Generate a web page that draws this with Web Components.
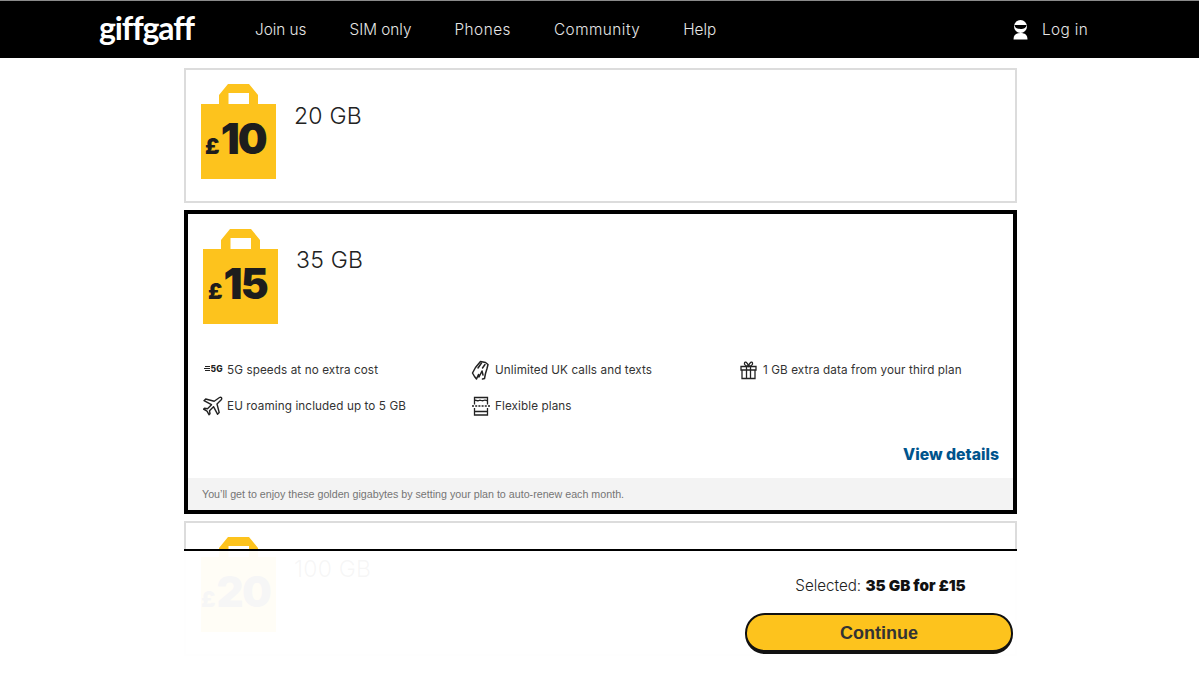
<!DOCTYPE html>
<html lang="en">
<head>
<meta charset="utf-8">
<title>giffgaff plans</title>
<style>
  html, body { margin: 0; height: 100%; background: #fff; }
  body { position: relative; overflow: hidden; font-family: "Inter", "Liberation Sans", sans-serif; color: #222; }
  main { display: flex; flex-direction: column; gap: 7px; width: 833px; margin: 10px 0 0 184px; }
</style>
</head>
<body>
<gg-header></gg-header>
<main>
  <gg-plan price="10" data="20 GB"></gg-plan>
  <gg-plan price="15" data="35 GB" selected>
    <gg-feature icon="fiveg">5G speeds at no extra cost</gg-feature>
    <gg-feature icon="hand">Unlimited UK calls and texts</gg-feature>
    <gg-feature icon="gift">1 GB extra data from your third plan</gg-feature>
    <gg-feature icon="plane">EU roaming included up to 5 GB</gg-feature>
    <gg-feature icon="box">Flexible plans</gg-feature>
  </gg-plan>
  <gg-plan price="20" data="100 GB"></gg-plan>
</main>
<gg-summary selected-text="35 GB for £15"></gg-summary>

<script>
class GgHeader extends HTMLElement {
  constructor() {
    super();
    this.attachShadow({mode: "open"});
    this.shadowRoot.innerHTML = `
<style>
  :host { display: flex; align-items: center; background: #000; border-top: 1px solid #8a8a8a; box-sizing: border-box; height: 58px; padding: 0 111px 0 99px; color: #e6e6e6; }
  .logo { font: 700 32px/1 "Lato", sans-serif; letter-spacing: -1.1px; color: #fff; width: 156px; margin-top: -4px; }
  nav { display: flex; gap: 43px; font: 300 15.300px/1 "Inter", sans-serif; }
  .wide { letter-spacing: .5px; }
  .login { margin-left: auto; display: flex; align-items: center; gap: 13px; font: 300 15.300px/1 "Inter", sans-serif; letter-spacing: .35px; }
  svg { display: block; }
</style>
<div class="logo">giffgaff</div>
<nav><span>Join us</span><span>SIM only</span><span class="wide">Phones</span><span class="wide">Community</span><span>Help</span></nav>
<div class="login">
  <svg width="17" height="20" viewBox="0 0 17 20">
    <circle cx="8.500" cy="6.500" r="6.500" fill="#fff"/>
    <path d="M2.500 5h12c0 2.500-2.500 4-6 4s-6-1.500-6-4z" fill="#000"/>
    <path d="M1.500 19.500c0-4.500 2.500-6.500 7-6.500s7 2 7 6.500z" fill="#fff"/>
  </svg>
  <span>Log in</span>
</div>`;
  }
}

class GgBag extends HTMLElement {
  constructor() {
    super();
    this.attachShadow({mode: "open"});
    this.shadowRoot.innerHTML = `
<style>
  :host { display: block; position: relative; width: 75px; height: 95px; flex: none; color: #1d1d1d; }
  svg { display: block; }
  .price { position: absolute; left: 0; right: 6px; top: 32px; display: flex; justify-content: center; align-items: baseline; font-family: "Inter", sans-serif; font-weight: 900; }
  .sym { font-size: 22px; margin-right: 1px; }
  .num { font-size: 42px; line-height: 46px; letter-spacing: -1.800px; }
</style>
<svg width="75" height="95" viewBox="0 0 75 95">
  <path fill="#fdc31d" fill-rule="evenodd" d="M0 20h18v-9l9-11h21l9 11v9h18v75h-75zM27.500 9v11h20.500v-11z"/>
</svg>
<div class="price"><span class="sym">£</span><span class="num"></span></div>`;
  }
  set value(v) {
    this.shadowRoot.querySelector(".num").textContent = v;
  }
}

class GgPlan extends HTMLElement {
  constructor() {
    super();
    this.attachShadow({mode: "open"});
    this.shadowRoot.innerHTML = `
<style>
  :host { display: block; box-sizing: border-box; border: 2px solid #dcdcdc; background: #fff; }
  :host([selected]) { border: 4px solid #000; }
  .top { display: flex; padding: 14px 15px 22px; gap: 18px; }
  :host([selected]) .top { padding: 15px 15px 0; }
  .data { font: 300 23px/32px "Inter", sans-serif; margin-top: 16px; letter-spacing: .2px; color: #222; }
  :host([selected]) .data { margin-top: 15px; }
  .details { display: none; }
  :host([selected]) .details { display: block; }
  .grid { display: grid; grid-template-columns: repeat(3, 268px); row-gap: 12px; padding: 34px 15px 0; }
  .more { text-align: right; padding: 27px 14px 13px 0; font: 800 15.800px/20px "Inter", sans-serif; color: #00548c; }
  .note { background: #f3f3f3; height: 32px; padding-left: 14px; font: 10.700px/32px "Liberation Sans", sans-serif; color: #757575; }
</style>
<div class="top"><gg-bag></gg-bag><div class="data"></div></div>
<div class="details">
  <div class="grid"><slot></slot></div>
  <div class="more">View details</div>
  <div class="note">You’ll get to enjoy these golden gigabytes by setting your plan to auto-renew each month.</div>
</div>`;
    this.shadowRoot.querySelector(".data").textContent = this.getAttribute("data");
  }
  connectedCallback() {
    customElements.upgrade(this.shadowRoot);
    this.shadowRoot.querySelector("gg-bag").value = this.getAttribute("price");
  }
}

const featureIcons = {
  fiveg: `<svg width="20" height="20" viewBox="0 0 20 20" fill="none" stroke="#222" stroke-width="1">
    <path d="M2 6.500h5M1 8.500h6M2 10.500h5"/>
    <text x="7.500" y="11.800" font-family="Inter, sans-serif" font-size="8.500" font-weight="800" letter-spacing=".2" fill="#222" stroke="none">5G</text></svg>`,
  hand: `<svg width="20" height="20" viewBox="0 0 20 20" fill="none" stroke="#222" stroke-width="1.500" stroke-linejoin="round" stroke-linecap="round">
    <path d="M4.500 7.500l5-6 5 1 2.500 2-1 4-1.500 5-1 5-2 .5M4.500 7.500l-3 5.500 2 3.500 2 2.500 2-4.500.5 2.500 3-6 1 4"/>
    <path d="M10.500 3l-3.500 5M14 4.500l-2.500 3.500"/></svg>`,
  gift: `<svg width="20" height="20" viewBox="0 0 20 20" fill="none" stroke="#222" stroke-width="1.300">
    <path d="M2 6.500h15v3.500h-15zM3 10v8.500h13v-8.500M7.500 6.500v12M11.500 6.500v12"/>
    <path d="M9.500 6.500c-3-.5-4.500-2-4-3.500s3-1.500 4 3.500zM9.500 6.500c3-.5 4.500-2 4-3.500s-3-1.500-4 3.500z"/></svg>`,
  plane: `<svg width="20" height="20" viewBox="0 0 20 20" fill="none" stroke="#222" stroke-width="1.400" stroke-linejoin="round">
    <path d="M16.500 1.500c1.500-.8 2.700.4 2 2l-4.500 4.500 2.200 8.500-1.700 1.700-4-7.500-4 4 .5 3-1 1-2-3.500-3.500-2 1-1 3 .5 4-4-7.500-4 1.700-1.700 8.500 2.200z"/></svg>`,
  box: `<svg width="20" height="20" viewBox="0 0 20 20" fill="none" stroke="#222" stroke-width="1.300">
    <path d="M3.500 8.500v-7h13v7M3.500 12v7h13v-7M3.500 4.500c2-1 3 1 4.500 0s3 1 4.500 0 2.500 0 4 0M3.500 15.500h13"/>
    <path d="M1 10h18" stroke-dasharray="2 1.200"/></svg>`
};

class GgFeature extends HTMLElement {
  constructor() {
    super();
    this.attachShadow({mode: "open"});
    this.shadowRoot.innerHTML = `
<style>
  :host { display: flex; align-items: center; gap: 5px; height: 24px; font: 400 11.700px/24px "Inter", sans-serif; letter-spacing: .1px; color: #333; }
  .icon { width: 19px; height: 20px; flex: none; }
  svg { display: block; }
</style>
<span class="icon"></span><slot></slot>`;
    this.shadowRoot.querySelector(".icon").innerHTML = featureIcons[this.getAttribute("icon")];
  }
}

class GgSummary extends HTMLElement {
  constructor() {
    super();
    this.attachShadow({mode: "open"});
    this.shadowRoot.innerHTML = `
<style>
  :host { position: absolute; left: 184px; top: 549px; width: 833px; height: 125px; box-sizing: border-box; border-top: 2px solid #000; background: rgba(255,255,255,.96); display: flex; flex-direction: column; align-items: flex-end; padding: 0 4px 0 0; }
  .sel { width: 265px; padding-left: 3px; text-align: center; margin-top: 25px; font: 300 15.200px/20px "Inter", sans-serif; color: #222; }
  b { font-weight: 900; color: #111; }
  button { width: 268px; height: 41px; margin-top: 17px; box-sizing: border-box; border: 2px solid #111; border-bottom-width: 4px; border-radius: 20px; background: #fdc31d; font: 700 18px/1 "Liberation Sans", sans-serif; color: #333; padding: 0; }
</style>
<div class="sel">Selected: <b></b></div>
<button>Continue</button>`;
    this.shadowRoot.querySelector("b").textContent = this.getAttribute("selected-text");
  }
}

customElements.define("gg-header", GgHeader);
customElements.define("gg-feature", GgFeature);
customElements.define("gg-bag", GgBag);
customElements.define("gg-plan", GgPlan);
customElements.define("gg-summary", GgSummary);
</script>
</body>
</html>
